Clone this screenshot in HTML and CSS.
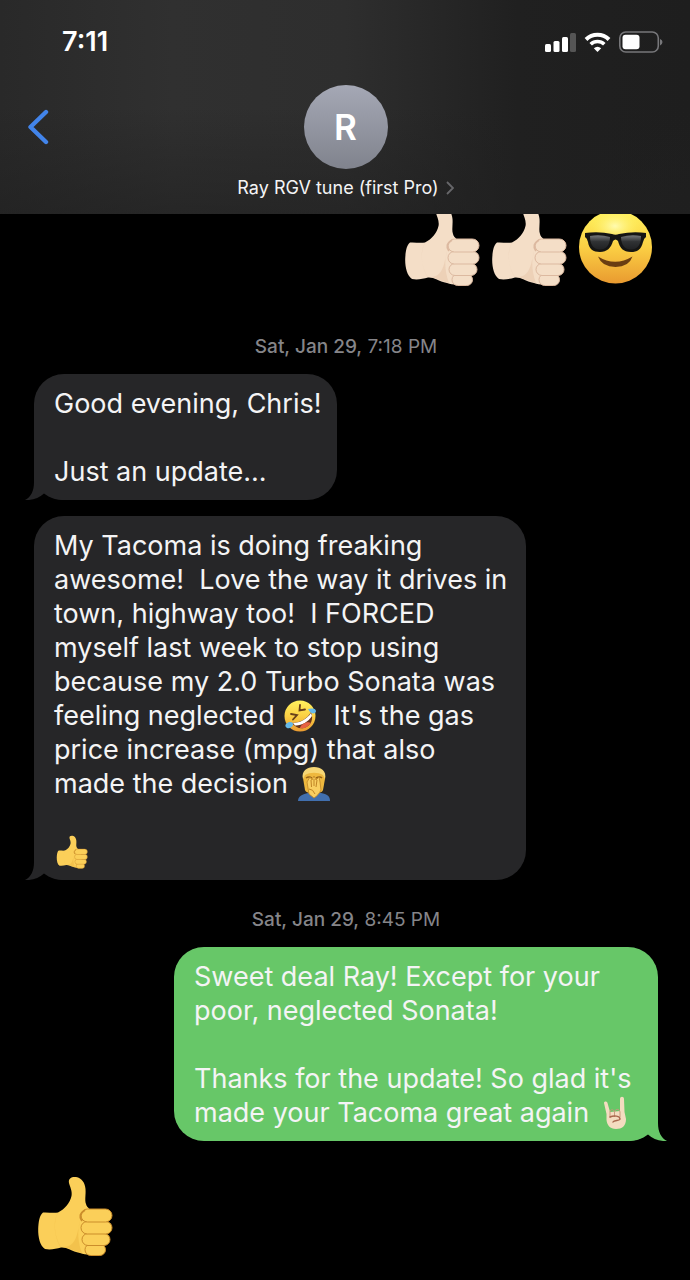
FILE: index.html
```
<!doctype html>
<html lang="en">
	<head>
		<meta charset="UTF-8" />
		<meta name="viewport" content="width=device-width, initial-scale=1.0" />
		<title>Messages</title>
		<link rel="stylesheet" href="styles.css">
	</head>
	<body>
		<!-- shared shapes -->
		<svg class="defs" width="0" height="0" aria-hidden="true">
			<defs>
				<linearGradient id="face" x1="0" y1="0" x2="0" y2="1">
					<stop offset="0" stop-color="#fff25e" />
					<stop offset="0.5" stop-color="#fbd044" />
					<stop offset="1" stop-color="#e99a30" />
				</linearGradient>
				<linearGradient id="lens" x1="0" y1="0" x2="0" y2="1">
					<stop offset="0" stop-color="#77797b" />
					<stop offset="0.45" stop-color="#303234" />
					<stop offset="1" stop-color="#202123" />
				</linearGradient>
				<radialGradient id="shine">
					<stop offset="0" stop-color="#fffbb0" />
					<stop offset="1" stop-color="#fff25e" stop-opacity="0" />
				</radialGradient>
			</defs>
			<symbol id="tail" viewBox="0 0 40 30">
				<path fill="currentColor" d="M9 0V12C9 21 6 27 0 30C8 30.500 14 28 19 23.500C25 28 31 30 40 30V0Z" />
			</symbol>
			<symbol id="thumb" viewBox="0 0 78 82">
				<path class="skin" d="M33 8C32 3 36 1.500 40 2C46 3 49 8 49.500 14C50 20 48.500 25 50 29C51 33 55 35 60 38L64 78C57 80 50 80 44 78C35 76 31 72 25 72.500C20 74 14 75 9 74C4 71 2 62 2.200 54C2.500 47 3.500 40 7 37.500C12 37 17 38.500 22 37.500C29 34 34 28 35.500 21C36.500 16 34 12 33 8Z" />
				<path class="skin-shade" d="M22 38C17 46 18 62 25 72C21 69 15 48 22 38Z" />
				<path class="skin-shade" d="M44 46C41 56 42 68 46 78C38 76 33 73 27 72C40 72 41 60 44 46Z" />
				<rect class="skin crease" x="49" y="69" width="20.500" height="11.500" rx="5.700" />
				<rect class="skin crease" x="46" y="58.500" width="28" height="12" rx="6" />
				<rect class="skin crease" x="45" y="46.500" width="31" height="12.500" rx="6.200" />
				<rect class="skin crease" x="45" y="34" width="31" height="13" rx="6.500" />
				<path class="crease-line" d="M49 35C44 38 43 42 46 46" />
			</symbol>
		</svg>

		<header class="top-bar">
			<div class="status">
				<time class="clock">7:11</time>
				<div class="status-icons">
					<svg width="31" height="20" viewBox="0 0 31 20" role="img" aria-label="Signal">
						<rect x="0" y="12" width="6" height="8" rx="1.500" fill="#fff" />
						<rect x="8.500" y="9" width="6" height="11" rx="1.500" fill="#fff" />
						<rect x="17" y="5" width="6" height="15" rx="1.500" fill="#fff" />
						<rect x="25" y="1" width="6" height="19" rx="1.500" fill="#555" />
					</svg>
					<svg width="27" height="20" viewBox="0 0 27 20" role="img" aria-label="Wi-Fi">
						<path d="M2 7.500A16.500 16.500 0 0 1 25 7.500" fill="none" stroke="#fff" stroke-width="4" />
						<path d="M6.700 12.200A9.800 9.800 0 0 1 20.300 12.200" fill="none" stroke="#fff" stroke-width="3.600" />
						<path d="M13.500 20L9.800 16.300Q13.500 13.200 17.200 16.300Z" fill="#fff" />
					</svg>
					<svg width="44" height="22" viewBox="0 0 44 22" role="img" aria-label="Battery">
						<rect x="0.800" y="1" width="38.500" height="20" rx="6" fill="none" stroke="#77777a" stroke-width="1.600" />
						<rect x="3.500" y="3.800" width="17" height="14.500" rx="3" fill="#fff" />
						<path d="M41 8Q43.500 9 43.500 11Q43.500 13 41 14.500Z" fill="#77777a" />
					</svg>
				</div>
			</div>
			<nav class="nav">
				<button class="back" aria-label="Back">
					<svg width="22" height="36" viewBox="0 0 22 36">
						<path d="M19 3L3.500 18L19 33" fill="none" stroke="#4284ea" stroke-width="4.400" stroke-linecap="round" stroke-linejoin="round" />
					</svg>
				</button>
				<button class="contact">
					<span class="avatar">R</span>
					<span class="name">Ray RGV tune (first Pro)
						<svg width="8" height="14" viewBox="0 0 8 14">
							<path d="M1 1L7 7L1 13" fill="none" stroke="#67676a" stroke-width="1.800" />
						</svg>
					</span>
				</button>
			</nav>
		</header>

		<main class="chat">
			<div class="big-emoji sent first">
				<svg class="pale" width="78" height="82" role="img" aria-label="Thumbs up"><use href="#thumb" /></svg>
				<svg class="pale" width="78" height="82" role="img" aria-label="Thumbs up"><use href="#thumb" /></svg>
				<svg width="78" height="82" viewBox="0 0 78 82" role="img" aria-label="Smiling face with sunglasses">
					<circle cx="38.500" cy="42" r="36.500" fill="url(#face)" />
					<ellipse cx="38" cy="21" rx="25" ry="17" fill="url(#shine)" />
					<path d="M8 28Q22 26 35 29Q38.500 30.500 42 29Q56 26 69 28L69 32Q67 33 66 37C64 45 60 47 54 47C46 47 43 43 41 36Q38.500 33 36 36C34 43 30 47 23 47C16 47 12 44 11 37Q10 33 8 32Z" fill="#151514" />
					<path d="M13 31Q23 29 33 32C33 40 29 44.500 23 44.500C16 44.500 13 39 13 31Z" fill="url(#lens)" />
					<path d="M44 32Q54 29 64 31C64 39 61 44.500 54 44.500C48 44.500 44 40 44 32Z" fill="url(#lens)" />
					<path d="M21 51.500Q38 62 55.500 51.500Q52 62 38.500 62Q25 62 21 51.500Z" fill="#6a3d12" />
				</svg>
			</div>

			<p class="stamp"><b>Sat, Jan 29,</b> 7:18 PM</p>

			<div class="bubble received">
				<p>Good evening, Chris!</p>
				<p>Just an update...</p>
				<svg class="tail" width="40" height="30" aria-hidden="true"><use href="#tail" /></svg>
			</div>

			<div class="bubble received">
				<p>My Tacoma is doing freaking awesome!&nbsp; Love the way it drives in town, highway too!&nbsp; I FORCED myself last week to stop using because my 2.0 Turbo Sonata was feeling neglected <svg class="emoji" viewBox="0 0 34 34" role="img" aria-label="Rolling on the floor laughing">
						<circle cx="17" cy="17" r="15.500" fill="url(#face)" />
						<path d="M8 15L14 16L10 20.500M17 6L16.500 11.500L22 10.500" fill="none" stroke="#68401a" stroke-width="1.800" stroke-linecap="round" />
						<path d="M9 24C17 24 24 20 28 13C31 20 28 27 21 29C16 30 12 28 9 24Z" fill="#67351b" />
						<path d="M10 24C17 24 24 20 28 14L29 17C25 23 18 27 12 26.500Z" fill="#fff" />
						<path d="M17 29C18 25 24 22 28 24C25 28 21 30 17 29Z" fill="#e66243" />
						<path d="M3 25C6 22 10 23 10 25C10 28 6 30 4 29C2 28 2 26 3 25ZM25 10C28 9 33 9 33 12C33 15 29 15 27 13Z" fill="#65b9e9" />
					</svg>&nbsp; It's the gas price increase (mpg) that also made the decision <svg class="emoji" viewBox="0 0 34 34" role="img" aria-label="Man facepalming">
						<path d="M1 34C1 29 6 27 11 26H24C30 27 33 29 33 34Z" fill="#416fae" />
						<path d="M6 11C5 5 10 1 17 1C24 1 29 5 28 12L26 23C24 28 10 28 8 23Z" fill="#eeb83e" />
						<path d="M6 12C4 4 10 0 17 0C24 0 30 4 28 12L26 8C21 5 13 5 8 8Z" fill="#f7d775" />
						<path d="M9 11Q12 9 15 11M19 11Q23 9 25 11" fill="none" stroke="#956419" stroke-width="1.500" />
						<path d="M10 15L13 10L15 13L17 9L19 13L22 10L23 15L24 23C22 27 20 29 17 31L12 27Z" fill="#f9cf61" stroke="#bf8425" stroke-width="0.800" />
						<path d="M14 13L14.500 20M17 12V19M20 13L19 20M12 22Q16 22 18 27" fill="none" stroke="#bf8425" stroke-width="1" />
					</svg></p>
				<p><svg class="emoji yellow" viewBox="0 0 78 82" role="img" aria-label="Thumbs up"><use href="#thumb" /></svg></p>
				<svg class="tail" width="40" height="30" aria-hidden="true"><use href="#tail" /></svg>
			</div>

			<p class="stamp second"><b>Sat, Jan 29,</b> 8:45 PM</p>

			<div class="bubble sent">
				<p>Sweet deal Ray! Except for your poor, neglected Sonata!</p>
				<p>Thanks for the update! So glad it's made your Tacoma great again <svg class="emoji" viewBox="0 0 34 34" role="img" aria-label="Sign of the horns">
						<path d="M6 7C6 5 9 5 9.500 7L12 16L22 15L22 3C22 0 26 0 26 3L26.500 16L28 23C28 30 24 33 18 33C12 33 9 29 8.500 24L8.500 18Z" fill="#f4dcc0" />
						<path d="M12 22V16C12 13 16 13 16.500 16C17 12.500 21.500 12.500 22 16V21M16.500 16V21" fill="none" stroke="#c79a7d" stroke-width="1" />
						<path d="M12 21C16 19 22 20 22 23C22 25 16 24 15 26" fill="none" stroke="#a9684d" stroke-width="1.400" stroke-linecap="round" />
					</svg></p>
				<svg class="tail" width="40" height="30" aria-hidden="true"><use href="#tail" /></svg>
			</div>

			<div class="big-emoji last">
				<svg class="yellow" width="78" height="82" role="img" aria-label="Thumbs up"><use href="#thumb" /></svg>
			</div>
		</main>
	</body>
</html>
```
FILE: styles.css
```
* {
	box-sizing: border-box;
}
body {
	margin: 0;
	background-color: #000;
	color: #f4f4f5;
	font-family: Inter, "Liberation Sans", sans-serif;
}
p {
	margin: 0;
}
button {
	border: 0;
	padding: 0;
	background: none;
	color: inherit;
	font-family: inherit;
}
.defs {
	position: absolute;
}

/* header */
.top-bar {
	position: relative;
	z-index: 1;
	background: linear-gradient(to bottom, rgba(32, 32, 32, 0) 50%, rgba(32, 32, 32, 0.6)),
		linear-gradient(to right, #292929, #303030 25%, #2e2e2e 50%, #202020 75%, #1e1e1e);
}
.status {
	display: flex;
	justify-content: space-between;
	align-items: center;
	height: 83px;
	padding: 0 27px 0 62px;
}
.clock {
	font-size: 27px;
	font-weight: 600;
	color: #fff;
}
.status-icons {
	display: flex;
	align-items: center;
	gap: 8px;
}
.nav {
	display: grid;
	grid-template-columns: 1fr auto 1fr;
	align-items: start;
	padding: 2px 26px 15px 27px;
}
.back {
	display: flex;
	align-items: center;
	justify-self: start;
	height: 84px;
}
.contact {
	display: flex;
	flex-direction: column;
	align-items: center;
	gap: 8px;
}
.avatar {
	display: flex;
	justify-content: center;
	align-items: center;
	width: 84px;
	height: 84px;
	border-radius: 50%;
	background: linear-gradient(#a5a8b5, #80838d);
	color: #fff;
	font-size: 35px;
	font-weight: 600;
}
.name {
	display: flex;
	align-items: center;
	gap: 7px;
	font-size: 18px;
	line-height: 22px;
}

/* conversation */
.chat {
	display: flex;
	flex-direction: column;
	align-items: flex-start;
	gap: 16px;
	padding: 0 32px 22px 34px;
}
.big-emoji {
	display: flex;
	gap: 9px;
	padding: 0 3px 0 2px;
}
.first {
	margin-top: -9px;
}
.last {
	margin-top: 18px;
}
.stamp {
	align-self: center;
	margin-top: 33px;
	color: #858589;
	font-size: 19px;
	line-height: 22px;
}
.stamp b {
	font-weight: 500;
}
.second {
	margin-top: 13px;
}
.bubble {
	position: relative;
	isolation: isolate;
	max-width: 492px;
	padding: 13px 16px 11px 20px;
	border-radius: 30px;
	font-size: 27px;
	line-height: 34px;
}
.bubble p + p {
	margin-top: 34px;
}
.received {
	background-color: #262628;
}
.sent {
	align-self: flex-end;
}
.bubble.sent {
	max-width: 484px;
	background-color: #67c768;
}
.tail {
	position: absolute;
	z-index: -1;
	bottom: 0;
	left: -9px;
	color: #262628;
}
.sent .tail {
	left: auto;
	right: -9px;
	color: #67c768;
	transform: scaleX(-1);
}
.emoji {
	width: 34px;
	height: 34px;
	margin: -4px 1px;
	vertical-align: -4px;
}

/* hands */
.pale {
	--skin: #f4dec7;
	--shade: #e5c4a8;
	--line: #dcb9a0;
}
.yellow {
	--skin: #fbcf59;
	--shade: #ebb53f;
	--line: #cb8d2b;
}
.skin {
	fill: var(--skin);
}
.skin-shade {
	fill: var(--shade);
	opacity: 0.5;
}
.crease {
	stroke: var(--line);
	stroke-width: 1;
}
.crease-line {
	fill: none;
	stroke: var(--line);
	stroke-width: 2;
}
```
